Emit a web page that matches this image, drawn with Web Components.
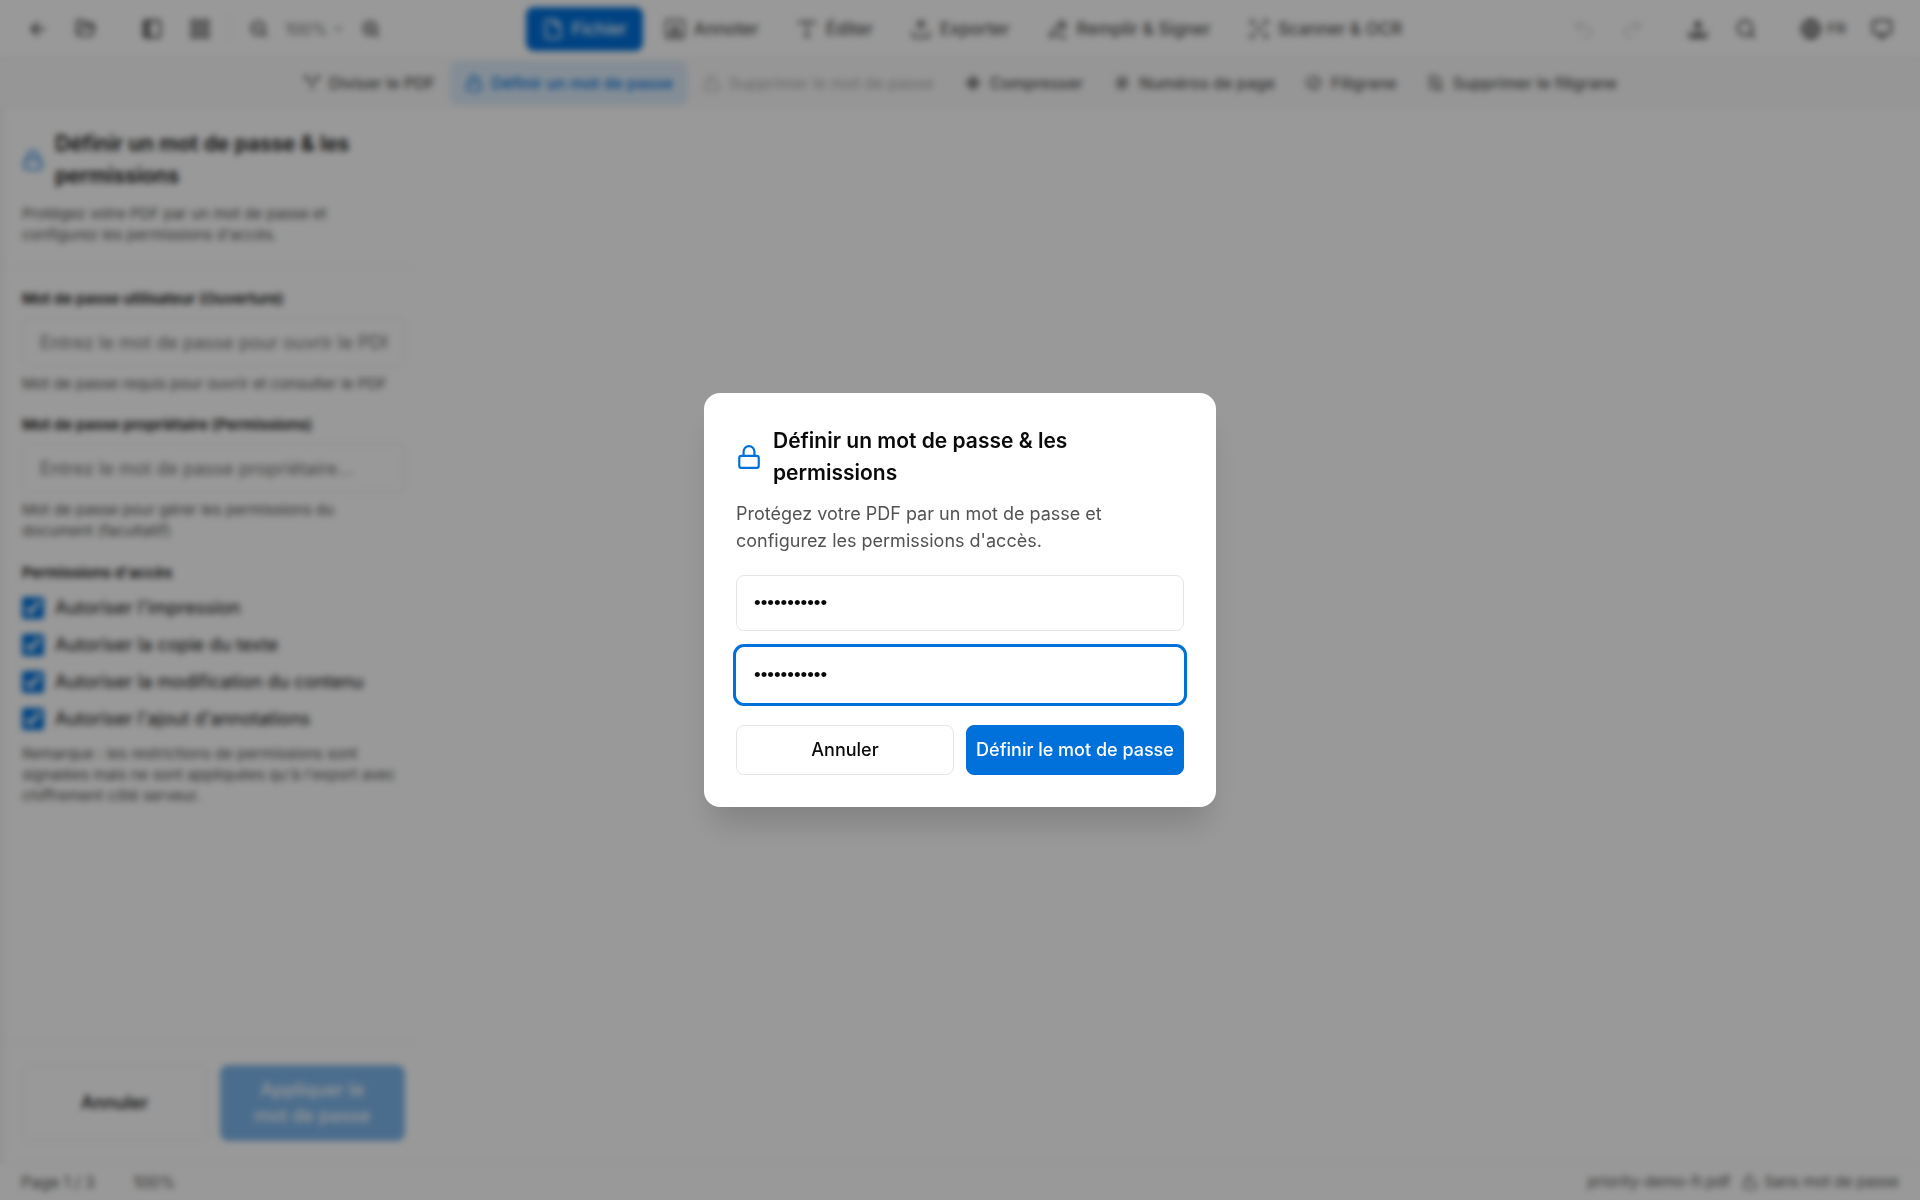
<!DOCTYPE html>
<html lang="fr">
<head>
<meta charset="utf-8">
<title>priority-demo-fr.pdf</title>
<style>
  html, body {
    height: 100%;
    margin: 0;
  }
  body {
    font-family: Inter, "Liberation Sans", sans-serif;
    color: #0a0a0a;
    background: #fff;
  }
</style>
</head>
<body>
<pdf-app></pdf-app>

<script>
/* Icon paths, 24x24 grid, stroked */
const ICONS = {
  back: '<path d="M19 12H5M12 5l-7 7 7 7"/>',
  folder: '<path d="m6 14 2-4h13l-2.5 9H4a2 2 0 0 1-2-2V5a2 2 0 0 1 2-2h5l2 3h7a2 2 0 0 1 2 2v2"/>',
  panel: '<rect x="3" y="3" width="18" height="18" rx="2"/><path d="M9 3v18M6 3v18"/>',
  grid: '<rect x="3" y="3" width="7" height="7"/><rect x="14" y="3" width="7" height="7"/><rect x="3" y="14" width="7" height="7"/><rect x="14" y="14" width="7" height="7"/>',
  zoomOut: '<circle cx="11" cy="11" r="8"/><path d="m21 21-4-4M8 11h6"/>',
  zoomIn: '<circle cx="11" cy="11" r="8"/><path d="m21 21-4-4M8 11h6M11 8v6"/>',
  chevron: '<path d="m6 9 6 6 6-6"/>',
  file: '<path d="M14 2H6a2 2 0 0 0-2 2v16a2 2 0 0 0 2 2h12a2 2 0 0 0 2-2V8zM14 2v6h6"/>',
  annotate: '<rect x="2" y="2" width="20" height="20" rx="2"/><path d="m8 16 4-9 4 9M9 14h6M6 18h12"/>',
  type: '<path d="M4 7V4h16v3M12 4v16M9 20h6"/>',
  upload: '<path d="M3 15v4a2 2 0 0 0 2 2h14a2 2 0 0 0 2-2v-4M17 8l-5-5-5 5M12 3v12"/>',
  pen: '<path d="m16 3 5 5L9 19l-6 2 2-6zM13 21h8M13 6l5 5"/>',
  scan: '<path d="M3 7V3h4M17 3h4v4M21 17v4h-4M7 21H3v-4M8 8l2 2M16 8l-2 2M8 16l2-2M16 16l-2-2"/>',
  undo: '<path d="M8 14 3 9l5-5M3 9h11a6 6 0 0 1 0 12h-2"/>',
  redo: '<path d="m16 14 5-5-5-5M21 9H10a6 6 0 0 0 0 12h2"/>',
  download: '<path d="M3 15v6h18v-6M12 4v12M8 9l4-5 4 5M7 18h10"/>',
  search: '<circle cx="11" cy="11" r="8"/><path d="m21 21-5-5"/>',
  globe: '<circle cx="12" cy="12" r="10"/><path d="M2 12h20M12 2c5 6 5 14 0 20M12 2c-5 6-5 14 0 20"/>',
  monitor: '<rect x="2" y="3" width="20" height="14" rx="2"/><path d="M9 21h6M12 17v4"/>',
  split: '<path d="M3 7V3h4M21 7V3h-4M12 21v-8L3 3M12 13l9-10"/>',
  lock: '<rect x="3" y="11" width="18" height="11" rx="2"/><path d="M7 11V7a5 5 0 0 1 10 0v4"/>',
  unlock: '<rect x="3" y="11" width="18" height="11" rx="2"/><path d="M7 11V7a5 5 0 0 1 9-3"/>',
  compress: '<path d="M12 2v7M12 22v-7M2 12h7M22 12h-7M8 6l4 4 4-4M8 18l4-4 4 4M6 8l4 4-4 4M18 8l-4 4 4 4"/>',
  hash: '<path d="M4 9h16M4 15h16M10 3 8 21M16 3l-2 18"/>',
  stamp: '<path d="M9 4a6 6 0 1 0 0 14M9 4h6l6 6v4l-7 7-6-6 8-7"/>',
  eraser: '<path d="M4 3h9l5 5v4M4 3v16h6M8 9h4M8 13h4M12 14l8 8M20 14l-8 8"/>'
};

class AppIcon extends HTMLElement {
  constructor() {
    super();
    this.attachShadow({ mode: 'open' });
  }

  connectedCallback() {
    this.shadowRoot.innerHTML = `
      <style>
        :host {
          display: block;
          flex: none;
          width: var(--icon-size, 22px);
          height: var(--icon-size, 22px);
        }
        svg {
          display: block;
          width: 100%;
          height: 100%;
          fill: none;
          stroke: currentColor;
          stroke-width: 2;
          stroke-linecap: round;
          stroke-linejoin: round;
        }
      </style>
      <svg viewBox="0 0 24 24" aria-hidden="true">${ICONS[this.getAttribute('name')] || ''}</svg>
    `;
  }
}
customElements.define('app-icon', AppIcon);

class IconButton extends HTMLElement {
  constructor() {
    super();
    this.attachShadow({ mode: 'open' });
  }

  connectedCallback() {
    const disabled = this.hasAttribute('disabled') ? 'disabled' : '';
    this.shadowRoot.innerHTML = `
      <style>
        :host {
          display: block;
        }
        button {
          display: flex;
          align-items: center;
          justify-content: center;
          gap: 5px;
          min-width: 44px;
          height: 44px;
          padding: 0 10px;
          border: 0;
          background: none;
          color: #333;
          font: 400 15px/20px Inter, sans-serif;
        }
        button:disabled {
          opacity: 0.2;
        }
      </style>
      <button aria-label="${this.getAttribute('label')}" ${disabled}>
        <app-icon name="${this.getAttribute('icon')}"></app-icon><slot></slot>
      </button>
    `;
  }
}
customElements.define('icon-button', IconButton);

/* Main tabs and, with the "small" attribute, the tools below them */
class ToolTab extends HTMLElement {
  constructor() {
    super();
    this.attachShadow({ mode: 'open' });
  }

  connectedCallback() {
    const disabled = this.hasAttribute('disabled') ? 'disabled' : '';
    this.shadowRoot.innerHTML = `
      <style>
        :host {
          display: block;
          --icon-size: 22px;
        }
        button {
          display: flex;
          align-items: center;
          gap: 8px;
          height: 44px;
          padding: 0 16px;
          border: 0;
          border-radius: 8px;
          background: none;
          color: #525252;
          font: 500 17px/24px Inter, sans-serif;
          white-space: nowrap;
        }
        :host([small]) {
          --icon-size: 18px;
        }
        :host([small]) button {
          padding: 0 15px;
          font-size: 16px;
        }
        :host([active]) button {
          background: #0070da;
          color: #fff;
        }
        :host([small][active]) button {
          background: #dcecfb;
          color: #0070da;
        }
        button:disabled {
          opacity: 0.4;
        }
      </style>
      <button ${disabled}><app-icon name="${this.getAttribute('icon')}"></app-icon><slot></slot></button>
    `;
  }
}
customElements.define('tool-tab', ToolTab);

class AppButton extends HTMLElement {
  constructor() {
    super();
    this.attachShadow({ mode: 'open' });
  }

  connectedCallback() {
    const disabled = this.hasAttribute('disabled') ? 'disabled' : '';
    this.shadowRoot.innerHTML = `
      <style>
        :host {
          display: block;
        }
        button {
          width: 100%;
          height: 100%;
          padding: 11px 6px;
          border: 1px solid #e5e5e5;
          border-radius: 8px;
          background: #fff;
          color: #0a0a0a;
          font: 500 18px/26px Inter, sans-serif;
        }
        :host([primary]) button {
          border-color: #0070da;
          background: #0070da;
          color: #fff;
        }
        button:disabled {
          opacity: 0.5;
        }
      </style>
      <button ${disabled}><slot></slot></button>
    `;
  }
}
customElements.define('app-button', AppButton);

class PasswordField extends HTMLElement {
  constructor() {
    super();
    this.attachShadow({ mode: 'open' });
  }

  connectedCallback() {
    const label = this.getAttribute('label');
    const hint = this.getAttribute('hint');
    this.shadowRoot.innerHTML = `
      <style>
        :host {
          display: flex;
          flex-direction: column;
        }
        label {
          margin-bottom: 8px;
          font-size: 15px;
          font-weight: 600;
          line-height: 20px;
        }
        input {
          box-sizing: border-box;
          width: 100%;
          height: var(--field-height, 50px);
          padding: 0 17px;
          border: 1px solid #e5e5e5;
          border-radius: 8px;
          background: #fff;
          color: #0a0a0a;
          font: 400 18px/24px Inter, sans-serif;
          outline: 0;
        }
        /* narrower bullets once something is typed */
        input:not(:placeholder-shown) {
          font: 400 19px/24px "Liberation Sans", sans-serif;
        }
        input::placeholder {
          color: #737373;
        }
        :host([active]) input {
          border-color: #fff;
          box-shadow: 0 0 0 3px #0070da;
        }
        p {
          margin: 6px 0 0;
          color: #525252;
          font-size: 15px;
          line-height: 21px;
        }
      </style>
      ${label ? `<label for="field">${label}</label>` : ''}
      <input id="field" type="password" aria-label="${label || this.getAttribute('name')}"
        placeholder="${this.getAttribute('placeholder') || ''}" value="${this.getAttribute('value') || ''}">
      ${hint ? `<p>${hint}</p>` : ''}
    `;
  }
}
customElements.define('password-field', PasswordField);

class CheckRow extends HTMLElement {
  constructor() {
    super();
    this.attachShadow({ mode: 'open' });
  }

  connectedCallback() {
    this.shadowRoot.innerHTML = `
      <style>
        :host {
          display: block;
        }
        label {
          display: flex;
          align-items: center;
          gap: 11px;
          font-size: 18px;
          line-height: 26px;
        }
        input {
          width: 22px;
          height: 22px;
          margin: 0;
          accent-color: #0070da;
        }
      </style>
      <label><input type="checkbox" checked><slot></slot></label>
    `;
  }
}
customElements.define('check-row', CheckRow);

class PanelHeading extends HTMLElement {
  constructor() {
    super();
    this.attachShadow({ mode: 'open' });
  }

  connectedCallback() {
    this.shadowRoot.innerHTML = `
      <style>
        :host {
          display: block;
        }
        h2 {
          display: flex;
          align-items: center;
          gap: 11px;
          margin: 0;
          font-size: 21px;
          font-weight: 600;
          line-height: 32px;
        }
        app-icon {
          color: #0070da;
        }
        p {
          margin: 11px 0 0;
          color: #525252;
          font-size: var(--text-size, 18px);
          line-height: var(--text-line, 27px);
        }
      </style>
      <h2><app-icon name="lock"></app-icon><span>Définir un mot de passe &amp; les permissions</span></h2>
      <p>Protégez votre PDF par un mot de passe et configurez les permissions d'accès.</p>
    `;
  }
}
customElements.define('panel-heading', PanelHeading);

class AppToolbar extends HTMLElement {
  constructor() {
    super();
    this.attachShadow({ mode: 'open' });
  }

  connectedCallback() {
    this.shadowRoot.innerHTML = `
      <style>
        :host {
          display: block;
        }
        .main {
          display: flex;
          align-items: center;
          justify-content: space-between;
          height: 58px;
          padding: 0 16px;
          border-bottom: 1px solid #ebebeb;
        }
        .group, nav {
          display: flex;
          align-items: center;
          gap: 4px;
        }
        nav {
          gap: 5px;
        }
        .end {
          padding-left: 12px;
        }
        .wide {
          margin-left: 18px;
        }
        .divider {
          width: 1px;
          height: 28px;
          margin: 0 3px;
          background: #ebebeb;
        }
        .zoom {
          --icon-size: 20px;
        }
        .level {
          display: flex;
          align-items: center;
          gap: 4px;
          padding: 0;
          border: 0;
          background: none;
          color: #737373;
          font: 400 16px/20px Inter, sans-serif;
          --icon-size: 14px;
        }
        .tools {
          display: flex;
          justify-content: center;
          height: 44px;
          padding: 2px 0;
          border-bottom: 1px solid #f0f0f0;
          background: #fafafa;
        }
      </style>
      <header class="main">
        <div class="group">
          <icon-button icon="back" label="Retour"></icon-button>
          <icon-button icon="folder" label="Ouvrir"></icon-button>
          <icon-button icon="panel" label="Panneau" class="wide"></icon-button>
          <icon-button icon="grid" label="Vignettes"></icon-button>
          <span class="divider"></span>
          <icon-button icon="zoomOut" label="Zoom arrière" class="zoom"></icon-button>
          <button class="level">100%<app-icon name="chevron"></app-icon></button>
          <icon-button icon="zoomIn" label="Zoom avant" class="zoom"></icon-button>
        </div>
        <nav>
          <tool-tab icon="file" active>Fichier</tool-tab>
          <tool-tab icon="annotate">Annoter</tool-tab>
          <tool-tab icon="type">Éditer</tool-tab>
          <tool-tab icon="upload">Exporter</tool-tab>
          <tool-tab icon="pen">Remplir &amp; Signer</tool-tab>
          <tool-tab icon="scan">Scanner &amp; OCR</tool-tab>
        </nav>
        <div class="group end">
          <icon-button icon="undo" label="Annuler" disabled></icon-button>
          <icon-button icon="redo" label="Rétablir" disabled></icon-button>
          <icon-button icon="download" label="Télécharger" class="wide"></icon-button>
          <icon-button icon="search" label="Rechercher"></icon-button>
          <icon-button icon="globe" label="Langue" class="wide">FR</icon-button>
          <icon-button icon="monitor" label="Thème"></icon-button>
        </div>
      </header>
      <div class="tools">
        <tool-tab small icon="split">Diviser le PDF</tool-tab>
        <tool-tab small icon="lock" active>Définir un mot de passe</tool-tab>
        <tool-tab small icon="unlock" disabled>Supprimer le mot de passe</tool-tab>
        <tool-tab small icon="compress">Compresser</tool-tab>
        <tool-tab small icon="hash">Numéros de page</tool-tab>
        <tool-tab small icon="stamp">Filigrane</tool-tab>
        <tool-tab small icon="eraser">Supprimer le filigrane</tool-tab>
      </div>
    `;
  }
}
customElements.define('app-toolbar', AppToolbar);

class SidePanel extends HTMLElement {
  constructor() {
    super();
    this.attachShadow({ mode: 'open' });
  }

  connectedCallback() {
    this.shadowRoot.innerHTML = `
      <style>
        :host {
          display: flex;
          flex-direction: column;
          box-sizing: border-box;
          width: 416px;
          border-left: 5px solid #f5f5f5;
        }
        panel-heading {
          padding: 20px 11px 22px 17px;
          border-bottom: 1px solid #ebebeb;
          --text-size: 15px;
          --text-line: 21px;
        }
        .body {
          display: flex;
          flex: 1;
          flex-direction: column;
          padding: 21px 11px 0 17px;
        }
        password-field {
          margin-bottom: 21px;
        }
        fieldset {
          display: grid;
          gap: 11px;
          margin: 0;
          padding: 0;
          border: 0;
        }
        legend {
          margin-bottom: 11px;
          padding: 0;
          font-size: 15px;
          font-weight: 600;
          line-height: 22px;
        }
        p {
          margin: 11px 0 0;
          color: #525252;
          font-size: 15px;
          line-height: 21px;
        }
        footer {
          display: grid;
          grid-template-columns: 1fr 1fr;
          gap: 12px;
          padding: 22px 11px 22px 17px;
          border-top: 1px solid #ebebeb;
        }
      </style>
      <panel-heading></panel-heading>
      <div class="body">
        <password-field label="Mot de passe utilisateur (Ouverture)" placeholder="Entrez le mot de passe pour ouvrir le PDF"
          hint="Mot de passe requis pour ouvrir et consulter le PDF"></password-field>
        <password-field label="Mot de passe propriétaire (Permissions)" placeholder="Entrez le mot de passe propriétaire..."
          hint="Mot de passe pour gérer les permissions du document (facultatif)"></password-field>
        <fieldset>
          <legend>Permissions d'accès</legend>
          <check-row>Autoriser l'impression</check-row>
          <check-row>Autoriser la copie du texte</check-row>
          <check-row>Autoriser la modification du contenu</check-row>
          <check-row>Autoriser l'ajout d'annotations</check-row>
        </fieldset>
        <p>Remarque : les restrictions de permissions sont signalées mais ne sont appliquées qu'à l'export avec chiffrement côté serveur.</p>
      </div>
      <footer>
        <app-button>Annuler</app-button>
        <app-button primary disabled>Appliquer le<br>mot de passe</app-button>
      </footer>
    `;
  }
}
customElements.define('side-panel', SidePanel);

class StatusBar extends HTMLElement {
  constructor() {
    super();
    this.attachShadow({ mode: 'open' });
  }

  connectedCallback() {
    this.shadowRoot.innerHTML = `
      <style>
        :host {
          display: flex;
          justify-content: space-between;
          padding: 8px 21px;
          border-top: 1px solid #ebebeb;
          color: #525252;
          font-size: 16px;
          line-height: 20px;
          --icon-size: 16px;
        }
        div, .lock {
          display: flex;
          align-items: center;
        }
        .left {
          gap: 38px;
        }
        .right {
          gap: 12px;
          font-size: 15px;
        }
        .lock {
          gap: 6px;
        }
      </style>
      <div class="left"><span>Page 1 / 3</span><span>100%</span></div>
      <div class="right">
        <span>priority-demo-fr.pdf</span>
        <span class="lock"><app-icon name="unlock"></app-icon>Sans mot de passe</span>
      </div>
    `;
  }
}
customElements.define('status-bar', StatusBar);

class PasswordDialog extends HTMLElement {
  constructor() {
    super();
    this.attachShadow({ mode: 'open' });
  }

  connectedCallback() {
    this.shadowRoot.innerHTML = `
      <style>
        :host {
          position: fixed;
          inset: 0;
          display: grid;
          place-items: center;
          background: rgba(0, 0, 0, 0.4);
          backdrop-filter: blur(3px);
        }
        section {
          box-sizing: border-box;
          width: 512px;
          max-width: 100%;
          padding: 32px;
          border-radius: 16px;
          background: #fff;
          box-shadow: 0 24px 32px -8px rgba(0, 0, 0, 0.16);
          --icon-size: 26px;
          --field-height: 56px;
        }
        .fields {
          display: grid;
          gap: 16px;
          margin: 21px 0 22px;
        }
        .actions {
          display: grid;
          grid-template-columns: 1fr 1fr;
          gap: 12px;
        }
      </style>
      <section role="dialog" aria-modal="true">
        <panel-heading></panel-heading>
        <div class="fields">
          <password-field name="Mot de passe" value="motdepasse1"></password-field>
          <password-field name="Confirmer le mot de passe" value="motdepasse1" active></password-field>
        </div>
        <div class="actions">
          <app-button>Annuler</app-button>
          <app-button primary>Définir le mot de passe</app-button>
        </div>
      </section>
    `;
  }
}
customElements.define('password-dialog', PasswordDialog);

class PdfApp extends HTMLElement {
  constructor() {
    super();
    this.attachShadow({ mode: 'open' });
  }

  connectedCallback() {
    this.shadowRoot.innerHTML = `
      <style>
        :host {
          display: flex;
          flex-direction: column;
          min-height: 100%;
        }
        main {
          display: flex;
          flex: 1;
        }
      </style>
      <app-toolbar></app-toolbar>
      <main><side-panel></side-panel></main>
      <status-bar></status-bar>
      <password-dialog></password-dialog>
    `;
  }
}
customElements.define('pdf-app', PdfApp);
</script>
</body>
</html>
